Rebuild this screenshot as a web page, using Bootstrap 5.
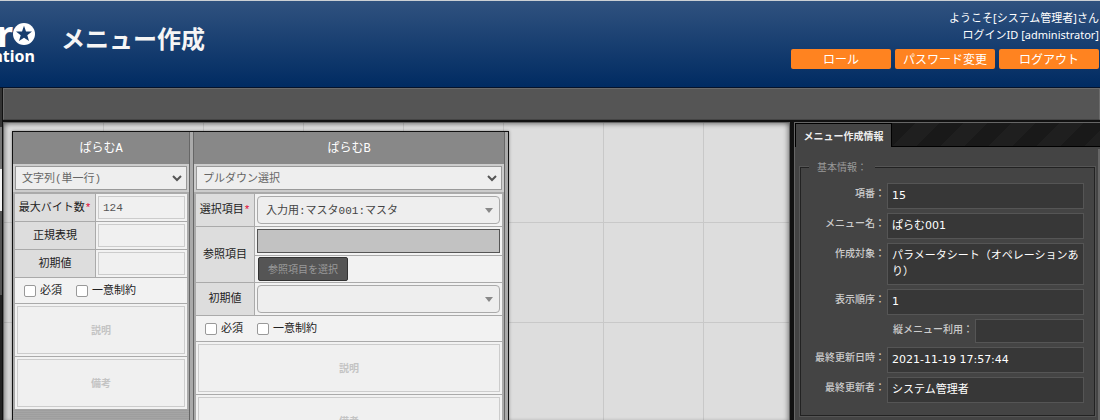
<!DOCTYPE html>
<html lang="ja">
<head>
<meta charset="utf-8">
<meta name="viewport" content="width=device-width, initial-scale=1">
<title>メニュー作成</title>
<link href="https://cdn.jsdelivr.net/npm/bootstrap@5.3.0/dist/css/bootstrap.min.css" rel="stylesheet">
<style>
body{font:11px/16px "Noto Sans","Noto Sans CJK JP",sans-serif;background:#111;color:#333}
.app-head{height:88px;background:linear-gradient(#30527f,#002b62);border-top:1px solid #ccd0d4;border-bottom:1px solid #05132b;color:#fff}
.brand{width:35px;line-height:1;padding-top:22px}
.brand-top{font-size:36px;font-weight:700;height:25px;line-height:22px}
.brand-sub{font-size:16px;font-weight:700;line-height:16px}
.app-title{font:700 24px/32px "Noto Sans CJK JP",sans-serif;color:#f5f5f5;padding-top:21px;margin-left:26px}
.user-area{line-height:17px;padding-right:1px}
.btn-user{width:100px;height:20px;padding:0;border:0;border-radius:2px;background:#ff8320;color:#fff;font:12px/20px "Noto Sans CJK JP",sans-serif}
.btn-user:hover{background:#ff9640;color:#fff}
.user-btns{gap:4px;margin-top:6px}
.side-strip{width:3px;border-right:1px solid #111;background:linear-gradient(#333 0 39px,#777 39px 81px,#f2f2f2 81px 123px,#555 123px 207px,#222 207px)}
.tool-strip{height:32px;background:#555;border:1px solid #6b6b6b;border-bottom-color:#444}
.main-row{padding-top:2px}
.work-area{border:1px solid #666;border-bottom:0;background:#ddd}
.grid-bg{background-color:#ddd;background-image:linear-gradient(#c8c8c8 1px,transparent 1px),linear-gradient(90deg,#c8c8c8 1px,transparent 1px);background-size:100px 100px;background-position:-1px -1px;box-shadow:inset 0 4px 4px -2px rgba(0,0,0,.3),inset 4px 0 4px -2px rgba(0,0,0,.3),inset -4px 0 4px -2px rgba(0,0,0,.3);padding:8px}
.sheet{border:1px solid #111;background:#aaa;gap:3px;padding-right:3px;box-shadow:0 0 3px rgba(0,0,0,.4);min-height:600px;font-family:"Liberation Mono","Noto Sans CJK JP",monospace}
.param{background:repeating-linear-gradient(#9e9e9e 0 1px,#a5a5a5 1px 2px);border-right:1px solid #666}
.param+.param{border-left:1px solid #666}
.param-a{width:177px}
.param-b{width:312px}
.param-title{height:32px;line-height:34px;font-size:12px;background:#888;color:#fff;text-align:center}
.param-type{background:#ccc;padding:2px}
.param select,.param input[type=text],.param textarea{display:block;width:100%;font:inherit;color:#555;background-color:#f0f0f0;border-radius:0}
.param .type-select{height:24px;appearance:none;border:1px solid #999;padding:1px 20px 0 6px;color:#666;background:#eee url("data:image/svg+xml,%3Csvg xmlns='http://www.w3.org/2000/svg' viewBox='0 0 10 8'%3E%3Cpath d='M1 2l4 4 4-4' fill='none' stroke='%23555' stroke-width='2'/%3E%3C/svg%3E") no-repeat right 4px center/10px 8px}
.param-body{margin:0 2px;border-top:2px solid #aaa;background:#f2f2f2;box-shadow:-2px 0 #aaa,2px 0 #aaa}
.frow+.frow{border-top:1px solid #aaa}
.fname{background:#ddd;border-right:1px solid #aaa;flex:none;color:#222}
.param-a .fname{width:81px}
.param-b .fname{width:59px}
.fcell{padding:2px;flex:1;min-width:0}
.fcell+.fcell{border-top:1px solid #aaa}
.param input[type=text]{height:23px;border:1px solid #ccc;padding:0 4px}
.param .item-select{height:28px;appearance:none;border:1px solid #aaa;border-radius:4px;padding:1px 20px 0 8px;color:#444;background:#eee url("data:image/svg+xml,%3Csvg xmlns='http://www.w3.org/2000/svg' viewBox='0 0 8 5'%3E%3Cpath d='M0 0h8L4 5z' fill='%23888'/%3E%3C/svg%3E") no-repeat right 6px center/8px 5px}
.param input.ref-box[type=text]{height:24px;border-color:#555;background:#c2c2c2}
.btn-ref{width:90px;height:24px;padding:0;font:10px/20px "Noto Sans CJK JP",sans-serif;color:#999;background:#555;border:1px solid #333;border-radius:2px}
.btn-cell{padding:1px 3px}
.req{color:#e0002d}
.check-row{height:26px;padding-left:9px;gap:14px;color:#222}
.check-row label{display:flex;align-items:center;gap:4px}
.check-row input{appearance:none;width:12px;height:12px;margin:0;border:1px solid #999;border-radius:2px;background:#fff}
.check-row input:checked{background:#555}
.param textarea{height:48px;resize:none;border:1px solid #ccc;text-align:center;padding:15px 0 0;font:700 10px/16px "Noto Sans CJK JP",sans-serif}
.param textarea::placeholder{color:#c4c4c4;opacity:1}
.info-panel{width:306px;border:1px solid #666;border-bottom:0;border-right:0;background:#444;color:#ddd;font-family:"DejaVu Sans","Noto Sans CJK JP",sans-serif}
.tab-bar{height:24px;background:repeating-linear-gradient(135deg,#191919 0 17px,#1f1f1f 17px 34px);border-bottom:1px solid #000}
.tab-btn{width:97px;height:24px;padding:0;border:1px solid #000;border-bottom:0;background:#444;color:#eee;font:700 10px/23px "Noto Sans CJK JP",sans-serif}
.info-body{padding:18px 3px 0 5px;border-right:2px solid #666;margin-top:2px}
.info-set{position:relative;border:1px solid #222;outline:1px solid #555;padding:15px 10px 12px}
.info-set legend{position:absolute;top:-9px;left:8px;width:auto;margin:0;padding:0 8px;background:#444;color:#999;font:10px/16px "Noto Sans CJK JP",sans-serif}
.info-list{display:flex;flex-direction:column;gap:4px;margin:0}
.info-list dt{width:76px;flex:none;text-align:right;padding-right:2px;font:500 10px/20px "Noto Sans CJK JP",sans-serif;color:#ccc}
.info-list .wide-name{width:164px}
.info-list dd{flex:1;min-width:0;min-height:26px;margin:0;padding:4px 3px 4px 4px;background:#373737;border:1px solid #555;color:#fff}
.info-list .empty-val{min-height:24px}
</style>
</head>
<body class="vh-100 d-flex flex-column overflow-hidden">
<header class="app-head d-flex flex-shrink-0">
  <div class="brand d-flex flex-column align-items-end overflow-hidden flex-shrink-0">
    <div class="brand-top d-flex">
      <span>r</span>
      <svg class="flex-shrink-0" width="22" height="22" viewBox="0 0 22 22" aria-hidden="true"><circle cx="11" cy="11" r="11" fill="#fff"/><path d="M11 2.800l2 5.600 6 .2-4.700 3.700 1.700 5.700-5-3.300-5 3.300 1.700-5.700L3 8.600l6-.2z" fill="#173d6e"/></svg>
    </div>
    <span class="brand-sub">ation</span>
  </div>
  <h1 class="app-title mb-0">メニュー作成</h1>
  <div class="user-area ms-auto text-end pt-2">
    <div>ようこそ[システム管理者]さん</div>
    <div>ログインID [administrator]</div>
    <div class="user-btns d-flex">
      <button type="button" class="btn btn-user">ロール</button>
      <button type="button" class="btn btn-user">パスワード変更</button>
      <button type="button" class="btn btn-user">ログアウト</button>
    </div>
  </div>
</header>
<div class="d-flex flex-grow-1 overflow-hidden">
  <div class="side-strip flex-shrink-0"></div>
  <div class="d-flex flex-column flex-grow-1 overflow-hidden">
    <div class="tool-strip flex-shrink-0"></div>
    <main class="main-row d-flex flex-grow-1 overflow-hidden">
      <div class="work-area flex-grow-1 overflow-hidden">
        <div class="grid-bg d-flex align-items-start h-100">
          <div class="sheet d-flex">
            <section class="param param-a">
              <div class="param-title">ぱらむA</div>
              <div class="param-type"><select class="type-select" aria-label="ぱらむAの入力方式"><option>文字列(単一行)</option></select></div>
              <div class="param-body">
                <div class="frow d-flex"><label for="maxA" class="fname d-flex align-items-center justify-content-center">最大バイト数<span class="req">*</span></label><div class="fcell"><input type="text" id="maxA" value="124"></div></div>
                <div class="frow d-flex"><label for="regA" class="fname d-flex align-items-center justify-content-center">正規表現</label><div class="fcell"><input type="text" id="regA"></div></div>
                <div class="frow d-flex"><label for="iniA" class="fname d-flex align-items-center justify-content-center">初期値</label><div class="fcell"><input type="text" id="iniA"></div></div>
                <div class="frow check-row d-flex align-items-center"><label><input type="checkbox">必須</label><label><input type="checkbox">一意制約</label></div>
                <div class="frow"><div class="fcell"><textarea aria-label="説明" placeholder="説明"></textarea></div></div>
                <div class="frow"><div class="fcell"><textarea aria-label="備考" placeholder="備考"></textarea></div></div>
              </div>
            </section>
            <section class="param param-b">
              <div class="param-title">ぱらむB</div>
              <div class="param-type"><select class="type-select" aria-label="ぱらむBの入力方式"><option>プルダウン選択</option></select></div>
              <div class="param-body">
                <div class="frow d-flex"><label for="selB" class="fname d-flex align-items-center justify-content-center">選択項目<span class="req">*</span></label><div class="fcell"><select class="item-select" id="selB"><option>入力用:マスタ001:マスタ</option></select></div></div>
                <div class="frow d-flex"><label for="refB" class="fname d-flex align-items-center justify-content-center">参照項目</label>
                  <div class="flex-grow-1"><div class="fcell"><input type="text" class="ref-box" id="refB" readonly></div><div class="fcell btn-cell"><button type="button" class="btn btn-ref d-block">参照項目を選択</button></div></div></div>
                <div class="frow d-flex"><label for="iniB" class="fname d-flex align-items-center justify-content-center">初期値</label><div class="fcell"><select class="item-select" id="iniB"><option></option></select></div></div>
                <div class="frow check-row d-flex align-items-center"><label><input type="checkbox">必須</label><label><input type="checkbox">一意制約</label></div>
                <div class="frow"><div class="fcell"><textarea aria-label="説明" placeholder="説明"></textarea></div></div>
                <div class="frow"><div class="fcell"><textarea aria-label="備考" placeholder="備考"></textarea></div></div>
              </div>
            </section>
          </div>
        </div>
      </div>
      <aside class="info-panel flex-shrink-0 ms-1">
        <div class="tab-bar"><button type="button" class="tab-btn d-block">メニュー作成情報</button></div>
        <div class="info-body h-100">
          <fieldset class="info-set">
            <legend>基本情報：</legend>
            <dl class="info-list">
              <div class="d-flex"><dt>項番：</dt><dd>15</dd></div>
              <div class="d-flex"><dt>メニュー名：</dt><dd>ぱらむ001</dd></div>
              <div class="d-flex"><dt>作成対象：</dt><dd>パラメータシート（オペレーションあり）</dd></div>
              <div class="d-flex"><dt>表示順序：</dt><dd>1</dd></div>
              <div class="d-flex"><dt class="wide-name">縦メニュー利用：</dt><dd class="empty-val"></dd></div>
              <div class="d-flex"><dt>最終更新日時：</dt><dd>2021-11-19 17:57:44</dd></div>
              <div class="d-flex"><dt>最終更新者：</dt><dd>システム管理者</dd></div>
            </dl>
          </fieldset>
        </div>
      </aside>
    </main>
  </div>
</div>
<script src="https://cdn.jsdelivr.net/npm/bootstrap@5.3.0/dist/js/bootstrap.bundle.min.js"></script>
</body>
</html>
